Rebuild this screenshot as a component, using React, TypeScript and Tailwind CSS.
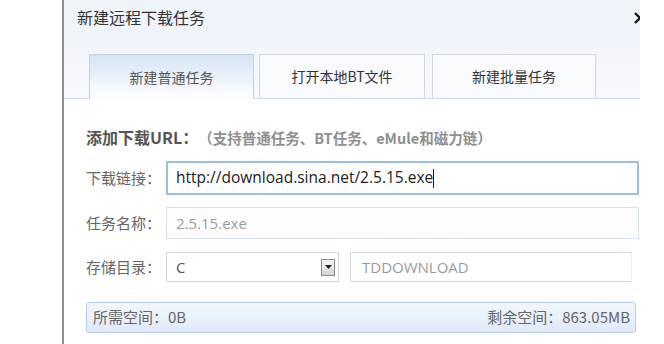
import React from 'react';

const cjk = { fontFamily: '"Noto Sans CJK SC", "Noto Sans", sans-serif' };
const latin = { fontFamily: '"Open Sans", "Noto Sans CJK SC", sans-serif' };

type TabProps = { label: string; active?: boolean; width: string };

const Tab: React.FC<TabProps> = ({ label, active, width }) => (
  <div
    className={`${width} h-[44px] flex items-center justify-center text-[14px] text-[#333] border border-b-0 ${
      active
        ? 'border-[#c3d2e2] bg-gradient-to-b from-[#d5e4f5] to-white text-[#555] -mb-px h-[45px]'
        : 'border-[#cdd7e2] bg-[#f8fafd]'
    }`}
  >
    {label}
  </div>
);

export default function App() {
  return (
    <div className="w-[664px] h-[344px] bg-white flex overflow-hidden" style={cjk}>
      <div className="w-[62px] shrink-0" />
      <div className="w-[2px] shrink-0 bg-[#8e8e8e]" />

      <div className="w-[576px] shrink-0 flex flex-col overflow-hidden">
        {/* 标题与标签页 */}
        <div className="h-[99px] bg-gradient-to-b from-[#eef3fa] to-[#f6f9fd] border-b border-[#cfdae6] flex flex-col">
          <div className="flex items-center justify-between pl-[13px] h-[34px]">
            <span className="text-[16px] text-[#333]">新建远程下载任务</span>
            <svg width="12" height="12" viewBox="0 0 12 12" className="-mr-[6px] mt-[1px]">
              <path d="M1 1l10 10M11 1L1 11" stroke="#1a1a1a" strokeWidth="2.4" />
            </svg>
          </div>
          <div className="flex items-end pl-[25px] mt-auto">
            <Tab label="新建普通任务" active width="w-[165px]" />
            <div className="w-[5px]" />
            <Tab label="打开本地BT文件" width="w-[166px]" />
            <div className="w-[7px]" />
            <Tab label="新建批量任务" width="w-[164px]" />
          </div>
        </div>

        {/* 表单 */}
        <div className="flex flex-col pl-[22px] pt-[26px]">
          <div className="flex items-baseline h-[22px]">
            <span className="text-[16px] font-bold text-[#555]">添加下载URL：</span>
            <span className="text-[14.5px] font-semibold text-[#8f8f8f]">（支持普通任务、BT任务、eMule和磁力链）</span>
          </div>

          <div className="flex items-center mt-[14px]">
            <span className="w-[80px] text-[15px] text-[#666]">下载链接：</span>
            <div className="w-[473px] h-[34px] border-2 border-[#9dbfdf] bg-white flex items-center pl-[8px]">
              <span className="text-[15.5px] text-[#222]" style={latin}>
                http://download.sina.net/2.5.15.exe
              </span>
              <span className="w-px h-[19px] bg-[#222]" />
            </div>
          </div>

          <div className="flex items-center mt-[12px]">
            <span className="w-[80px] text-[15px] text-[#666]">任务名称：</span>
            <div className="w-[473px] h-[32px] border border-[#d9e2ec] bg-[#fdfdfe] flex items-center pl-[9px]">
              <span className="text-[15px] text-[#9a9a9a]" style={latin}>
                2.5.15.exe
              </span>
            </div>
          </div>

          <div className="flex items-center mt-[13px]">
            <span className="w-[80px] text-[15px] text-[#666]">存储目录：</span>
            <div className="w-[173px] h-[30px] border border-[#cfd8e2] bg-white flex items-center pl-[9px] pr-[3px]">
              <span className="text-[15px] text-[#555] flex-1" style={latin}>
                C
              </span>
              <div className="w-[14px] h-[17px] border border-[#8a8a8a] bg-gradient-to-b from-[#f4f4f4] to-[#d6d6d6] flex items-center justify-center">
                <svg width="7" height="4" viewBox="0 0 7 4">
                  <path d="M0 0h7L3.5 4z" fill="#222" />
                </svg>
              </div>
            </div>
            <div className="w-[11px]" />
            <div className="w-[282px] h-[30px] border border-[#d2dbe5] border-r-[#e8edf3] bg-white flex items-center pl-[11px]">
              <span className="text-[15px] text-[#9a9a9a]" style={latin}>
                TDDOWNLOAD
              </span>
            </div>
          </div>

          <div className="w-[550px] h-[31px] mt-[20px] rounded-[3px] border border-[#b7cde4] bg-gradient-to-b from-[#f3f7fc] to-[#dfeaf7] flex items-center justify-between pl-[6px] pr-[5px] text-[15px] text-[#666]">
            <span>所需空间：0B</span>
            <span>剩余空间：863.05MB</span>
          </div>
        </div>
      </div>

      <div className="flex-1 bg-white" />
    </div>
  );
}
